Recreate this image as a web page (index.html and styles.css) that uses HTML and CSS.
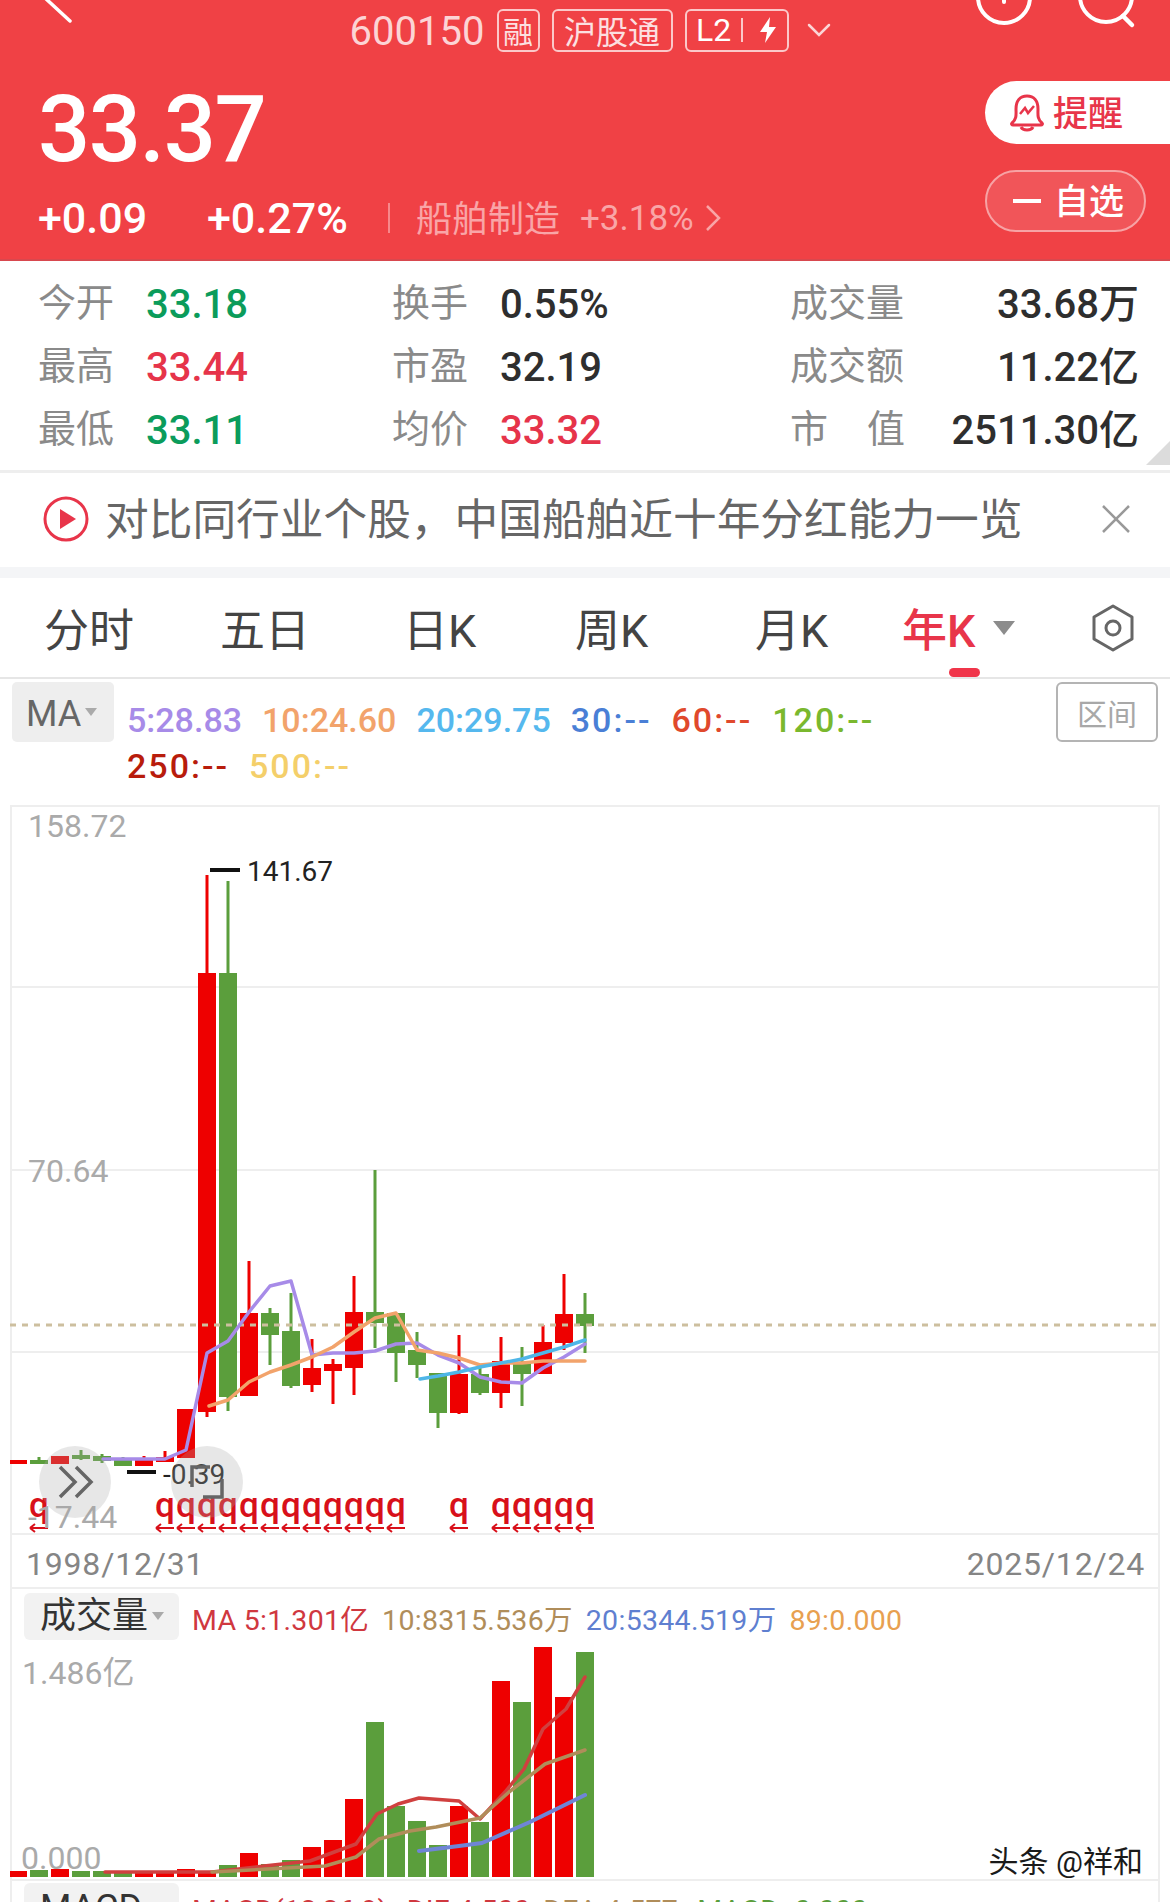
FILE: index.html
```html
<!DOCTYPE html>
<html lang="zh">
<head>
<meta charset="utf-8">
<title>600150</title>
<link rel="stylesheet" href="styles.css">
</head>
<body>
<div class="page">
  <header class="hero">
    <div class="nav">
      <svg class="nav-back" width="80" height="30" viewBox="0 0 80 30"><path d="M44 -3 L70 21" fill="none" stroke="#fff" stroke-width="3.5" stroke-linecap="round"/></svg>
      <div class="nav-mid">
        <span class="code">600150</span>
        <span class="badge badge-sq">融</span>
        <span class="badge badge-wide">沪股通</span>
        <span class="badge badge-l2"><b class="l2">L2</b><i class="l2-div"></i>
          <svg width="18" height="26" viewBox="0 0 18 26"><path d="M11 0 L1 15 H8 L6 26 L17 10 H10 Z" fill="#fff"/></svg></span>
        <svg class="nav-caret" width="24" height="14" viewBox="0 0 24 14"><path d="M2 2 L12 12 L22 2" fill="none" stroke="#fbd5d6" stroke-width="2.5" stroke-linecap="round"/></svg>
      </div>
      <div class="nav-right">
        <svg width="60" height="30" viewBox="0 0 60 30"><circle cx="30" cy="-3" r="26" fill="none" stroke="#fff" stroke-width="4"/><path d="M30 -2 V2" stroke="#fff" stroke-width="4" stroke-linecap="round"/></svg>
        <svg width="60" height="30" viewBox="0 0 60 30"><circle cx="28" cy="-4" r="26" fill="none" stroke="#fff" stroke-width="4"/><path d="M45 16 L54 25" stroke="#fff" stroke-width="4.5" stroke-linecap="round"/></svg>
      </div>
    </div>
    <div class="quote">
      <div class="quote-left">
        <div class="price">33.37</div>
        <div class="change">
          <span class="chg chg-a">+0.09</span>
          <span class="chg chg-b">+0.27%</span>
          <i class="change-div"></i>
          <span class="sector">船舶制造</span>
          <span class="sector-pct">+3.18%</span>
          <svg width="16" height="28" viewBox="0 0 16 28"><path d="M2 2 L14 14 L2 26" fill="none" stroke="#f9a5a7" stroke-width="2.5"/></svg>
        </div>
      </div>
      <div class="quote-right">
        <div class="btn-alert">
          <svg width="36" height="38" viewBox="0 0 36 38"><path d="M3 29 C8 25 7 20 7 15 C7 7 11 2 18 2 C25 2 29 7 29 15 C29 20 28 25 33 29 C34 30 33 31 32 31 H4 C3 31 2 30 3 29 Z" fill="none" stroke="#e8354a" stroke-width="3" stroke-linejoin="round"/><path d="M12 33 C14 37 22 37 24 33" fill="none" stroke="#e8354a" stroke-width="3"/><path d="M11 20 L16 14 L19 19 L25 12" fill="none" stroke="#e8354a" stroke-width="2.5"/></svg>
          <span class="btn-text">提醒</span>
        </div>
        <div class="btn-watch"><i class="minus"></i><span class="btn-text">自选</span></div>
      </div>
    </div>
  </header>

  <section class="stats">
    <div class="cell c1"><span class="lbl">今开</span><span class="val green">33.18</span></div>
    <div class="cell c2"><span class="lbl">换手</span><span class="val">0.55%</span></div>
    <div class="cell c3"><span class="lbl">成交量</span><span class="val">33.68万</span></div>
    <div class="cell c1"><span class="lbl">最高</span><span class="val red">33.44</span></div>
    <div class="cell c2"><span class="lbl">市盈</span><span class="val">32.19</span></div>
    <div class="cell c3"><span class="lbl">成交额</span><span class="val">11.22亿</span></div>
    <div class="cell c1"><span class="lbl">最低</span><span class="val green">33.11</span></div>
    <div class="cell c2"><span class="lbl">均价</span><span class="val red">33.32</span></div>
    <div class="cell c3"><span class="lbl lbl-split"><span>市</span><span>值</span></span><span class="val">2511.30亿</span></div>
    <i class="corner"></i>
  </section>

  <section class="news">
    <svg width="46" height="46" viewBox="0 0 46 46"><circle cx="23" cy="23" r="21" fill="none" stroke="#e8354a" stroke-width="3"/><path d="M17 13 L33 23 L17 33 Z" fill="#e8354a"/></svg>
    <span class="news-text">对比同行业个股，中国船舶近十年分红能力一览</span>
    <svg class="news-x" width="30" height="30" viewBox="0 0 30 30"><path d="M2 2 L28 28 M28 2 L2 28" stroke="#999" stroke-width="2.5"/></svg>
  </section>

  <nav class="tabs">
    <span class="tab">分时</span>
    <span class="tab">五日</span>
    <span class="tab">日K</span>
    <span class="tab">周K</span>
    <span class="tab">月K</span>
    <span class="tab tab-on">年K<i class="tab-caret"></i><i class="tab-bar"></i></span>
    <svg class="tab-gear" width="46" height="50" viewBox="0 0 46 50"><path d="M23 3 L42 14 V36 L23 47 L4 36 V14 Z" fill="none" stroke="#666" stroke-width="3" stroke-linejoin="round"/><circle cx="23" cy="25" r="7" fill="none" stroke="#666" stroke-width="3"/></svg>
  </nav>

  <section class="ma">
    <div class="ma-btn"><span class="ma-label">MA</span><i class="caret-sm"></i></div>
    <div class="ma-vals">
      <span class="m-purple">5:28.83</span>
      <span class="m-orange">10:24.60</span>
      <span class="m-sky">20:29.75</span>
      <span class="m-blue m-empty">30:--</span>
      <span class="m-red m-empty">60:--</span>
      <span class="m-green m-empty">120:--</span>
      <span class="m-dark m-empty">250:--</span>
      <span class="m-yellow m-empty">500:--</span>
    </div>
    <div class="range-btn">区间</div>
  </section>

  <section class="frame">
    <svg class="kline" width="1150" height="730" viewBox="10 805 1150 730">
      <defs>
        <g id="mark">
          <text class="q" x="0" y="1517" text-anchor="middle">q</text>
          <path d="M-9 1528 H9 M-9 1528 L-4 1524 M-9 1528 L-4 1532" fill="none" stroke="#d8101a" stroke-width="2"/>
        </g>
      </defs>
      <path class="grid" d="M10 806 H1160 M10 987 H1160 M10 1170 H1160 M10 1352 H1160 M10 1534 H1160"/>

      <g class="up">
        <rect x="9" y="1460" width="18" height="4"/>
        <rect x="51" y="1456" width="18" height="8"/>
        <rect x="142.500" y="1456" width="3" height="10"/><rect x="135" y="1460" width="18" height="6"/>
        <rect x="163.500" y="1451" width="3" height="11"/><rect x="156" y="1457" width="18" height="5"/>
        <rect x="177" y="1409" width="18" height="49"/>
        <rect x="205.500" y="875" width="3" height="542"/><rect x="198" y="973" width="18" height="439"/>
        <rect x="247.500" y="1261" width="3" height="135"/><rect x="240" y="1313" width="18" height="83"/>
        <rect x="310.500" y="1339" width="3" height="53"/><rect x="303" y="1368" width="18" height="17"/>
        <rect x="331.500" y="1359" width="3" height="45"/><rect x="324" y="1364" width="18" height="7"/>
        <rect x="352.500" y="1276" width="3" height="119"/><rect x="345" y="1312" width="18" height="56"/>
        <rect x="457.500" y="1335" width="3" height="79"/><rect x="450" y="1374" width="18" height="39"/>
        <rect x="499.500" y="1337" width="3" height="71"/><rect x="492" y="1361" width="18" height="32"/>
        <rect x="541.500" y="1325" width="3" height="49"/><rect x="534" y="1342" width="18" height="32"/>
        <rect x="562.500" y="1274" width="3" height="76"/><rect x="555" y="1314" width="18" height="29"/>
      </g>
      <g class="down">
        <rect x="37.500" y="1457" width="3" height="7"/><rect x="30" y="1460" width="18" height="4"/>
        <rect x="79.500" y="1450" width="3" height="10"/><rect x="72" y="1455" width="18" height="4"/>
        <rect x="100.500" y="1454" width="3" height="9"/><rect x="93" y="1456" width="18" height="5"/>
        <rect x="121.500" y="1457" width="3" height="9"/><rect x="114" y="1458" width="18" height="8"/>
        <rect x="226.500" y="881" width="3" height="530"/><rect x="219" y="973" width="18" height="424"/>
        <rect x="268.500" y="1308" width="3" height="57"/><rect x="261" y="1313" width="18" height="22"/>
        <rect x="289.500" y="1293" width="3" height="95"/><rect x="282" y="1331" width="18" height="55"/>
        <rect x="373.500" y="1170" width="3" height="178"/><rect x="366" y="1312" width="18" height="11"/>
        <rect x="394.500" y="1313" width="3" height="69"/><rect x="387" y="1313" width="18" height="40"/>
        <rect x="415.500" y="1332" width="3" height="46"/><rect x="408" y="1350" width="18" height="15"/>
        <rect x="436.500" y="1373" width="3" height="55"/><rect x="429" y="1373" width="18" height="40"/>
        <rect x="478.500" y="1368" width="3" height="27"/><rect x="471" y="1374" width="18" height="19"/>
        <rect x="520.500" y="1347" width="3" height="59"/><rect x="513" y="1362" width="18" height="12"/>
        <rect x="583.500" y="1293" width="3" height="60"/><rect x="576" y="1314" width="18" height="12"/>
      </g>
      <path class="dash" d="M10 1325 H1160"/>

      <polyline class="line l-purple" points="103,1459 123,1459 144,1459 165,1459 186,1450 207,1353 228,1341 249,1312 270,1286 291,1281 312,1355 333,1353 354,1353 375,1351 396,1344 417,1343 438,1355 459,1363 480,1377 501,1382 522,1383 543,1368 564,1357 585,1344"/>
      <polyline class="line l-orange" points="209,1406 228,1400 249,1382 270,1372 291,1365 312,1357 333,1347 354,1332 375,1318 396,1313 417,1350 438,1353 459,1358 480,1365 501,1363 522,1363 543,1361 564,1361 585,1361"/>
      <polyline class="line l-sky" points="420,1379 438,1376 459,1372 480,1367 501,1363 522,1359 543,1353 564,1347 585,1340"/>

      <text class="axis" x="28" y="837">158.72</text>
      <text class="axis" x="28" y="1182">70.64</text>
      <path class="peak" d="M210 870 H240 M127 1472 H156"/>
      <text class="peak-text" x="247" y="881">141.67</text>
      <text class="peak-text" x="163" y="1484">-0.39</text>

      <use href="#mark" x="39"/>
      <use href="#mark" x="165"/><use href="#mark" x="186"/><use href="#mark" x="207"/><use href="#mark" x="228"/>
      <use href="#mark" x="249"/><use href="#mark" x="270"/><use href="#mark" x="291"/><use href="#mark" x="312"/>
      <use href="#mark" x="333"/><use href="#mark" x="354"/><use href="#mark" x="375"/><use href="#mark" x="396"/>
      <use href="#mark" x="459"/>
      <use href="#mark" x="501"/><use href="#mark" x="522"/><use href="#mark" x="543"/><use href="#mark" x="564"/><use href="#mark" x="585"/>

      <text class="axis" x="28" y="1528">-17.44</text>

      <circle class="float" cx="75" cy="1482" r="36"/>
      <path class="float-ico" d="M60 1467 L75 1482 L60 1497 M76 1467 L91 1482 L76 1497"/>
      <circle class="float" cx="207" cy="1482" r="36"/>
      <path class="float-ico" d="M192 1487 V1467 H210 M203 1497 H222 V1479"/>
    </svg>

    <div class="dates"><span>1998/12/31</span><span>2025/12/24</span></div>

    <div class="vol">
      <div class="pane-head">
        <div class="pill">成交量<i class="caret-sm"></i></div>
        <span class="v-red">MA 5:1.301亿</span>
        <span class="v-tan">10:8315.536万</span>
        <span class="v-blue">20:5344.519万</span>
        <span class="v-amber">89:0.000</span>
      </div>
      <svg class="volbars" width="1150" height="232" viewBox="10 1646 1150 232">
        <g class="up">
          <rect x="9" y="1872" width="18" height="7"/>
          <rect x="51" y="1870" width="18" height="9"/>
          <rect x="135" y="1873" width="18" height="6"/>
          <rect x="156" y="1873" width="18" height="6"/>
          <rect x="177" y="1870" width="18" height="9"/>
          <rect x="198" y="1873" width="18" height="6"/>
          <rect x="240" y="1854" width="18" height="25"/>
          <rect x="303" y="1848" width="18" height="31"/>
          <rect x="324" y="1841" width="18" height="38"/>
          <rect x="345" y="1800" width="18" height="79"/>
          <rect x="450" y="1807" width="18" height="72"/>
          <rect x="492" y="1682" width="18" height="197"/>
          <rect x="534" y="1648" width="18" height="231"/>
          <rect x="555" y="1698" width="18" height="181"/>
        </g>
        <g class="down">
          <rect x="30" y="1871" width="18" height="8"/>
          <rect x="72" y="1872" width="18" height="7"/>
          <rect x="93" y="1872" width="18" height="7"/>
          <rect x="114" y="1874" width="18" height="5"/>
          <rect x="219" y="1866" width="18" height="13"/>
          <rect x="261" y="1865" width="18" height="14"/>
          <rect x="282" y="1861" width="18" height="18"/>
          <rect x="366" y="1723" width="18" height="156"/>
          <rect x="387" y="1807" width="18" height="72"/>
          <rect x="408" y="1822" width="18" height="57"/>
          <rect x="429" y="1846" width="18" height="33"/>
          <rect x="471" y="1823" width="18" height="56"/>
          <rect x="513" y="1703" width="18" height="176"/>
          <rect x="576" y="1653" width="18" height="226"/>
        </g>
        <polyline class="line l-vred" points="105,1873 212,1873 264,1867 310,1862 356,1845 377,1815 398,1805 419,1799 459,1802 480,1820 505,1793 524,1770 543,1730 566,1710 585,1678"/>
        <polyline class="line l-vtan" points="212,1873 268,1870 325,1867 356,1858 379,1840 410,1832 436,1828 480,1819 509,1793 545,1765 585,1751"/>
        <polyline class="line l-vblue" points="419,1852 459,1847 482,1844 530,1823 585,1796"/>
        <text class="axis" x="22" y="1685">1.486亿</text>
        <text class="axis" x="21" y="1870">0.000</text>
      </svg>
      <div class="watermark">头条 @祥和</div>
    </div>

    <div class="pane-head pane-macd">
      <div class="pill">MACD</div>
      <span class="v-red">MACD(12,26,9)</span>
      <span class="v-red gap">DIF 4.500</span>
      <span class="v-tan">DEA 4.577</span>
      <span class="v-green gap">MACD -0.000</span>
    </div>
  </section>
</div>
</body>
</html>
```
FILE: styles.css
```css
html, body { margin: 0; padding: 0; background: #fff; }
.page {
  width: 1170px;
  height: 1902px;
  overflow: hidden;
  font-family: Roboto, "Noto Sans CJK SC", sans-serif;
  color: #333;
}
i { display: block; font-style: normal; }
svg { display: block; }

/* header */
.hero { height: 259px; background: #f04145; border-bottom: 2px solid #d8484e; color: #fff; }
.nav { height: 64px; display: grid; grid-template-columns: 1fr auto 1fr; align-items: start; }
.nav-mid { display: flex; align-items: center; height: 60px; padding-left: 10px; }
.nav-right { display: flex; justify-content: flex-end; gap: 44px; padding-right: 32px; }
.code { font-size: 40px; line-height: 60px; padding-top: 4px; color: #fcd4d5; width: 147px; font-weight: 400; }
.badge {
  display: flex; align-items: center; justify-content: center;
  height: 43px; box-sizing: border-box;
  border: 2px solid #fbc8c9; border-radius: 6px;
  font-size: 32px; color: #fce0e1;
}
.badge-sq { width: 43px; font-size: 30px; margin-right: 12px; }
.badge-wide { width: 121px; margin-right: 12px; }
.badge-l2 { width: 104px; gap: 10px; }
.l2 { font-size: 32px; font-weight: 400; color: #fff; }
.l2-div { width: 2px; height: 24px; background: #fbc8c9; margin-right: 6px; }
.nav-caret { margin-left: 18px; }

.quote { display: flex; justify-content: space-between; }
.quote-left { padding: 12px 0 0 38px; }
.price { font-size: 92px; line-height: 108px; font-weight: 500; letter-spacing: -1.500px; }
.change { display: flex; align-items: center; height: 56px; margin-top: 6px; font-size: 43px; font-weight: 500; }
.chg-a { width: 169px; }
.chg-b { width: 181px; }
.change-div { width: 2px; height: 30px; background: #f7888b; margin-right: 26px; }
.sector { font-size: 36px; font-weight: 400; color: #f9a5a7; margin-right: 20px; padding-bottom: 4px; }
.sector-pct { font-size: 35px; font-weight: 400; color: #f9a5a7; margin-right: 11px; }

.quote-right { display: flex; flex-direction: column; align-items: flex-end; width: 185px; padding-top: 17px; }
.btn-alert {
  width: 185px; height: 63px; box-sizing: border-box;
  display: flex; align-items: center; gap: 8px; padding-left: 24px;
  background: #fff; border-radius: 32px 0 0 32px;
  color: #e8354a; font-size: 35px; font-weight: 500;
}
.btn-watch {
  align-self: flex-start;
  width: 161px; height: 62px; box-sizing: border-box; margin-top: 26px;
  display: flex; align-items: center; gap: 13px; padding-left: 26px;
  background: #f15559; border: 2px solid #f7a3a5; border-radius: 31px;
  font-size: 35px; font-weight: 500;
}
.btn-text { padding-bottom: 5px; }
.minus { width: 28px; height: 4px; background: #fff; }

/* stats */
.stats {
  position: relative;
  display: grid; grid-template-columns: 354px 398px 349px;
  grid-auto-rows: 63px;
  padding: 10px 0 0 38px; height: 199px;
  border-bottom: 3px solid #eeeeee;
}
.cell { display: flex; align-items: center; }
.lbl { font-size: 38px; color: #8a8a8a; padding-bottom: 7px; }
.val { font-size: 40px; line-height: 50px; font-weight: 500; color: #2e2e2e; padding-top: 4px; }
.c1 .lbl, .c2 .lbl { width: 77px; margin-right: 31px; }
.c3 .lbl { width: 115px; }
.c3 .val { margin-left: auto; }
.lbl-split { display: flex; justify-content: space-between; }
.green { color: #0b9c5b; }
.red { color: #e6344a; }
.corner {
  position: absolute; right: 0; bottom: 5px; width: 0; height: 0;
  border-left: 24px solid transparent; border-bottom: 24px solid #dcdcdc;
}

/* news */
.news { height: 94px; box-sizing: border-box; padding: 0 0 2px 43px; display: flex; align-items: center; background: #fff; }
.news-text { font-size: 43.700px; color: #666; margin-left: 16px; width: 996px; white-space: nowrap; padding-bottom: 6px; }

/* tabs */
.tabs {
  height: 112px; box-sizing: border-box;
  border-top: 11px solid #f4f5f7; border-bottom: 2px solid #e6e6e6;
  display: grid; grid-template-columns: 176px 183px 172px 180px 147px 188px 46px;
  align-items: center; padding-left: 44px;
  font-size: 45px; color: #444;
}
.tab { position: relative; display: flex; align-items: center; height: 99px; }
.tab-on { color: #e8354a; font-weight: 500; }
.tab-caret {
  margin-left: 18px; width: 0; height: 0;
  border-left: 11px solid transparent; border-right: 11px solid transparent;
  border-top: 14px solid #8c8c8c;
}
.tab-bar { position: absolute; left: 47px; bottom: 0; width: 31px; height: 9px; border-radius: 5px; background: #f0354a; }

/* MA row */
.ma { height: 126px; box-sizing: border-box; display: flex; padding: 3px 12px 0; position: relative; }
.ma-btn {
  width: 102px; height: 60px; flex: none; box-sizing: border-box;
  display: flex; align-items: center; padding-left: 14px;
  background: #eeeeee; border-radius: 5px; font-size: 36px; color: #666;
}
.ma-label { padding-top: 3px; }
.caret-sm {
  margin-left: 4px; width: 0; height: 0;
  border-left: 6px solid transparent; border-right: 6px solid transparent;
  border-top: 8px solid #aaa;
}
.ma-vals {
  display: flex; flex-wrap: wrap; gap: 0 20px; align-content: flex-start;
  width: 830px; margin-left: 13px; padding-top: 15px;
  font-size: 34px; line-height: 46px; font-weight: 500;
}
.m-empty { letter-spacing: 2px; }
.m-purple { color: #a78be8; }
.m-orange { color: #f2a36b; }
.m-sky { color: #55b8ee; }
.m-blue { color: #4a7fd6; }
.m-red { color: #e0492c; }
.m-green { color: #7ab82e; }
.m-dark { color: #b81c0c; }
.m-yellow { color: #f4cf6a; }
.range-btn {
  width: 102px; height: 60px; margin-left: auto; box-sizing: border-box;
  display: flex; align-items: center; justify-content: center;
  border: 2px solid #b4b4b4; border-radius: 6px; color: #a8a8a8; font-size: 30px;
}

/* chart */
.frame { margin: 0 10px; width: 1150px; box-sizing: border-box; border-left: 2px solid #eeeeee; border-right: 2px solid #eeeeee; }
.kline, .volbars { margin-left: -2px; }
.grid { stroke: #eeeeee; stroke-width: 2; fill: none; }
.dash { stroke: #cdbf9f; stroke-width: 3; stroke-dasharray: 6 6; fill: none; }
.up { fill: #ee0000; }
.down { fill: #5b9e3c; }
.line { fill: none; stroke-width: 3.500; stroke-linejoin: round; stroke-linecap: round; }
.l-purple { stroke: #a78be8; }
.l-orange { stroke: #f2a36b; }
.l-sky { stroke: #4fb6e8; }
.l-vred { stroke: #d0403f; }
.l-vtan { stroke: #b08d5a; }
.l-vblue { stroke: #6f85d6; stroke-width: 4; }
.axis { font-size: 32px; fill: #aaa; font-family: Roboto, "Noto Sans CJK SC", sans-serif; }
.peak { stroke: #111; stroke-width: 4; fill: none; }
.peak-text { font-size: 28px; fill: #222; font-family: Roboto, sans-serif; }
.q { font-size: 35px; font-weight: 500; fill: #d8101a; font-family: Roboto, sans-serif; }
.float { fill: rgba(170, 170, 170, 0.28); }
.float-ico { fill: none; stroke: #666; stroke-width: 3.500; }

.dates {
  height: 54px; box-sizing: border-box; display: flex; justify-content: space-between; align-items: center;
  padding: 5px 13px 0 14px; border-bottom: 2px solid #eeeeee;
  font-size: 32px; letter-spacing: 0.800px; color: #858585;
}
.vol { position: relative; height: 290px; border-bottom: 2px solid #eeeeee; box-sizing: content-box; }
.pane-head {
  display: flex; align-items: center; height: 56px; box-sizing: border-box;
  padding: 12px 0 4px 12px; gap: 13px; white-space: nowrap;
  font-size: 28.500px; line-height: 40px; letter-spacing: 0.300px; font-weight: 400;
}
.pill {
  width: 155px; height: 47px; box-sizing: border-box; flex: none;
  display: flex; align-items: center; padding-left: 16px;
  background: #f2f2f2; border-radius: 6px; font-size: 36px; letter-spacing: 0; color: #333; font-weight: 400;
}
.vol .pill { margin-top: -10px; }
.v-red { color: #d0383f; }
.v-tan { color: #b08d5a; }
.v-blue { color: #5f7fd0; }
.v-amber { color: #e8a050; }
.v-green { color: #5b9e3c; }
.gap { margin-left: 6px; }
.watermark {
  position: absolute; right: 15px; bottom: 0;
  font-size: 30px; line-height: 34px; color: #1a1a1a; font-weight: 400;
  text-shadow: 0 0 2px #fff;
}
.pane-macd { height: 60px; align-items: flex-start; padding-top: 2px; }
.pane-macd .pill { height: 50px; color: #333; }
.pane-macd span { line-height: 56px; }
```
